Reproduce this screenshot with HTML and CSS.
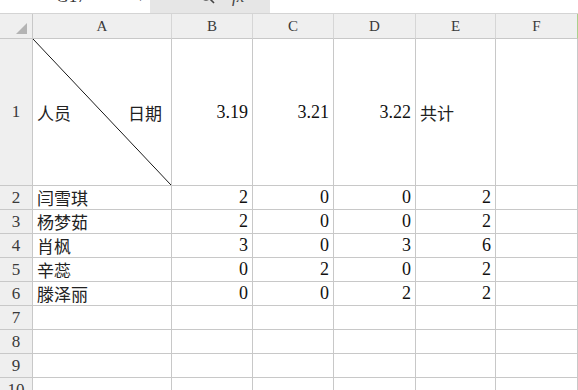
FILE: index.html
```html
<!DOCTYPE html>
<html lang="zh">
<head>
    <meta charset="UTF-8">
    <title>表格</title>
    <link rel="stylesheet" href="styles.css">
</head>
<body>
    <div class="formula-bar">
        <div class="name-box">
            <span class="name-text">G17</span>
            <span class="drop">&#9660;</span>
        </div>
        <div class="tools">
            <svg class="search" width="16" height="16" viewBox="0 0 16 16">
                <circle cx="6" cy="6" r="5" fill="none" stroke="#444" stroke-width="1.4"/>
                <line x1="9.5" y1="9.5" x2="14" y2="14" stroke="#444" stroke-width="1.6"/>
            </svg>
            <span class="fx">fx</span>
        </div>
        <div class="formula"></div>
    </div>

    <div class="sheet">
        <!-- 列头 -->
        <div class="corner">
            <svg width="11" height="11" viewBox="0 0 11 11"><polygon points="11,0 11,11 0,11" fill="#b4b4b4"/></svg>
        </div>
        <div class="col-head">A</div>
        <div class="col-head">B</div>
        <div class="col-head">C</div>
        <div class="col-head">D</div>
        <div class="col-head">E</div>
        <div class="col-head last">F</div>

        <!-- 第1行 -->
        <div class="row-head">1</div>
        <div class="cell diag"><span>人员</span><span>日期</span></div>
        <div class="cell num">3.19</div>
        <div class="cell num">3.21</div>
        <div class="cell num">3.22</div>
        <div class="cell text">共计</div>
        <div class="cell"></div>

        <div class="row-head">2</div>
        <div class="cell text">闫雪琪</div>
        <div class="cell num">2</div>
        <div class="cell num">0</div>
        <div class="cell num">0</div>
        <div class="cell num">2</div>
        <div class="cell"></div>

        <div class="row-head">3</div>
        <div class="cell text">杨梦茹</div>
        <div class="cell num">2</div>
        <div class="cell num">0</div>
        <div class="cell num">0</div>
        <div class="cell num">2</div>
        <div class="cell"></div>

        <div class="row-head">4</div>
        <div class="cell text">肖枫</div>
        <div class="cell num">3</div>
        <div class="cell num">0</div>
        <div class="cell num">3</div>
        <div class="cell num">6</div>
        <div class="cell"></div>

        <div class="row-head">5</div>
        <div class="cell text">辛蕊</div>
        <div class="cell num">0</div>
        <div class="cell num">2</div>
        <div class="cell num">0</div>
        <div class="cell num">2</div>
        <div class="cell"></div>

        <div class="row-head">6</div>
        <div class="cell text">滕泽丽</div>
        <div class="cell num">0</div>
        <div class="cell num">0</div>
        <div class="cell num">2</div>
        <div class="cell num">2</div>
        <div class="cell"></div>

        <div class="row-head">7</div>
        <div class="cell"></div><div class="cell"></div><div class="cell"></div><div class="cell"></div><div class="cell"></div><div class="cell"></div>

        <div class="row-head">8</div>
        <div class="cell"></div><div class="cell"></div><div class="cell"></div><div class="cell"></div><div class="cell"></div><div class="cell"></div>

        <div class="row-head">9</div>
        <div class="cell"></div><div class="cell"></div><div class="cell"></div><div class="cell"></div><div class="cell"></div><div class="cell"></div>

        <div class="row-head">10</div>
        <div class="cell"></div><div class="cell"></div><div class="cell"></div><div class="cell"></div><div class="cell"></div><div class="cell"></div>
    </div>
</body>
</html>
```

FILE: styles.css
```css
/* 全体 */
body {
    margin: 0;
    width: 578px;
    height: 390px;
    overflow: hidden;
    background: #fff;
    font-family: "Liberation Serif", "Noto Sans CJK SC", serif;
    color: #222;
}

/* 上部の数式バー（上が切れている） */
.formula-bar {
    display: flex;
    height: 14px;
    border-bottom: 1px solid #d4d4d4;
    box-sizing: border-box;
    overflow: hidden;
}

.name-box {
    width: 150px;
    background: #fff;
    position: relative;
    overflow: hidden;
}

.name-text {
    display: block;
    margin-top: -12px;
    text-align: center;
    padding-right: 8px;
    font-size: 17px;
    line-height: 17px;
    color: #333;
}

.drop {
    position: absolute;
    right: 5px;
    top: -7px;
    font-size: 9px;
    color: #555;
}

.tools {
    width: 120px;
    background: #e6e6e6;
    display: flex;
    gap: 16px;
    padding-left: 50px;
    box-sizing: border-box;
    overflow: hidden;
}

.search {
    margin-top: -11px;
}

.fx {
    display: block;
    margin-top: -12px;
    font-style: italic;
    font-size: 17px;
    line-height: 17px;
    color: #444;
}

.formula {
    flex: 1;
    background: #fff;
}

/* シート */
.sheet {
    display: grid;
    grid-template-columns: 33px 139px 81px 81px 82px 80px 82px;
    grid-template-rows: 25px 147px repeat(8, 24px) 24px;
}

.sheet > div {
    box-sizing: border-box;
    border-right: 1px solid #c8c8c8;
    border-bottom: 1px solid #c8c8c8;
}

.corner {
    background: #efefef;
    display: flex;
    justify-content: flex-end;
    align-items: flex-end;
    padding: 0 5px 4px 0;
}

.col-head {
    background: #efefef;
    display: flex;
    align-items: center;
    justify-content: center;
    font-size: 15px;
    color: #3a3a3a;
    border-right-color: #d6d6d6 !important;
}

.col-head.last {
    border-right-color: #a9d08e !important;
}

.row-head {
    background: #efefef;
    display: flex;
    align-items: center;
    justify-content: center;
    font-size: 17px;
    color: #3a3a3a;
}

.cell {
    display: flex;
    align-items: center;
    font-size: 17px;
    white-space: nowrap;
    overflow: hidden;
}

.cell.num {
    justify-content: flex-end;
    padding-right: 4px;
    font-size: 18px;
    color: #111;
}

.cell.text {
    padding-left: 4px;
}

/* 斜線ヘッダ */
.cell.diag {
    justify-content: space-between;
    padding: 0 9px 0 4px;
    background: linear-gradient(to top right, transparent calc(50% - 0.7px), #111 50%, transparent calc(50% + 0.7px));
}
```
